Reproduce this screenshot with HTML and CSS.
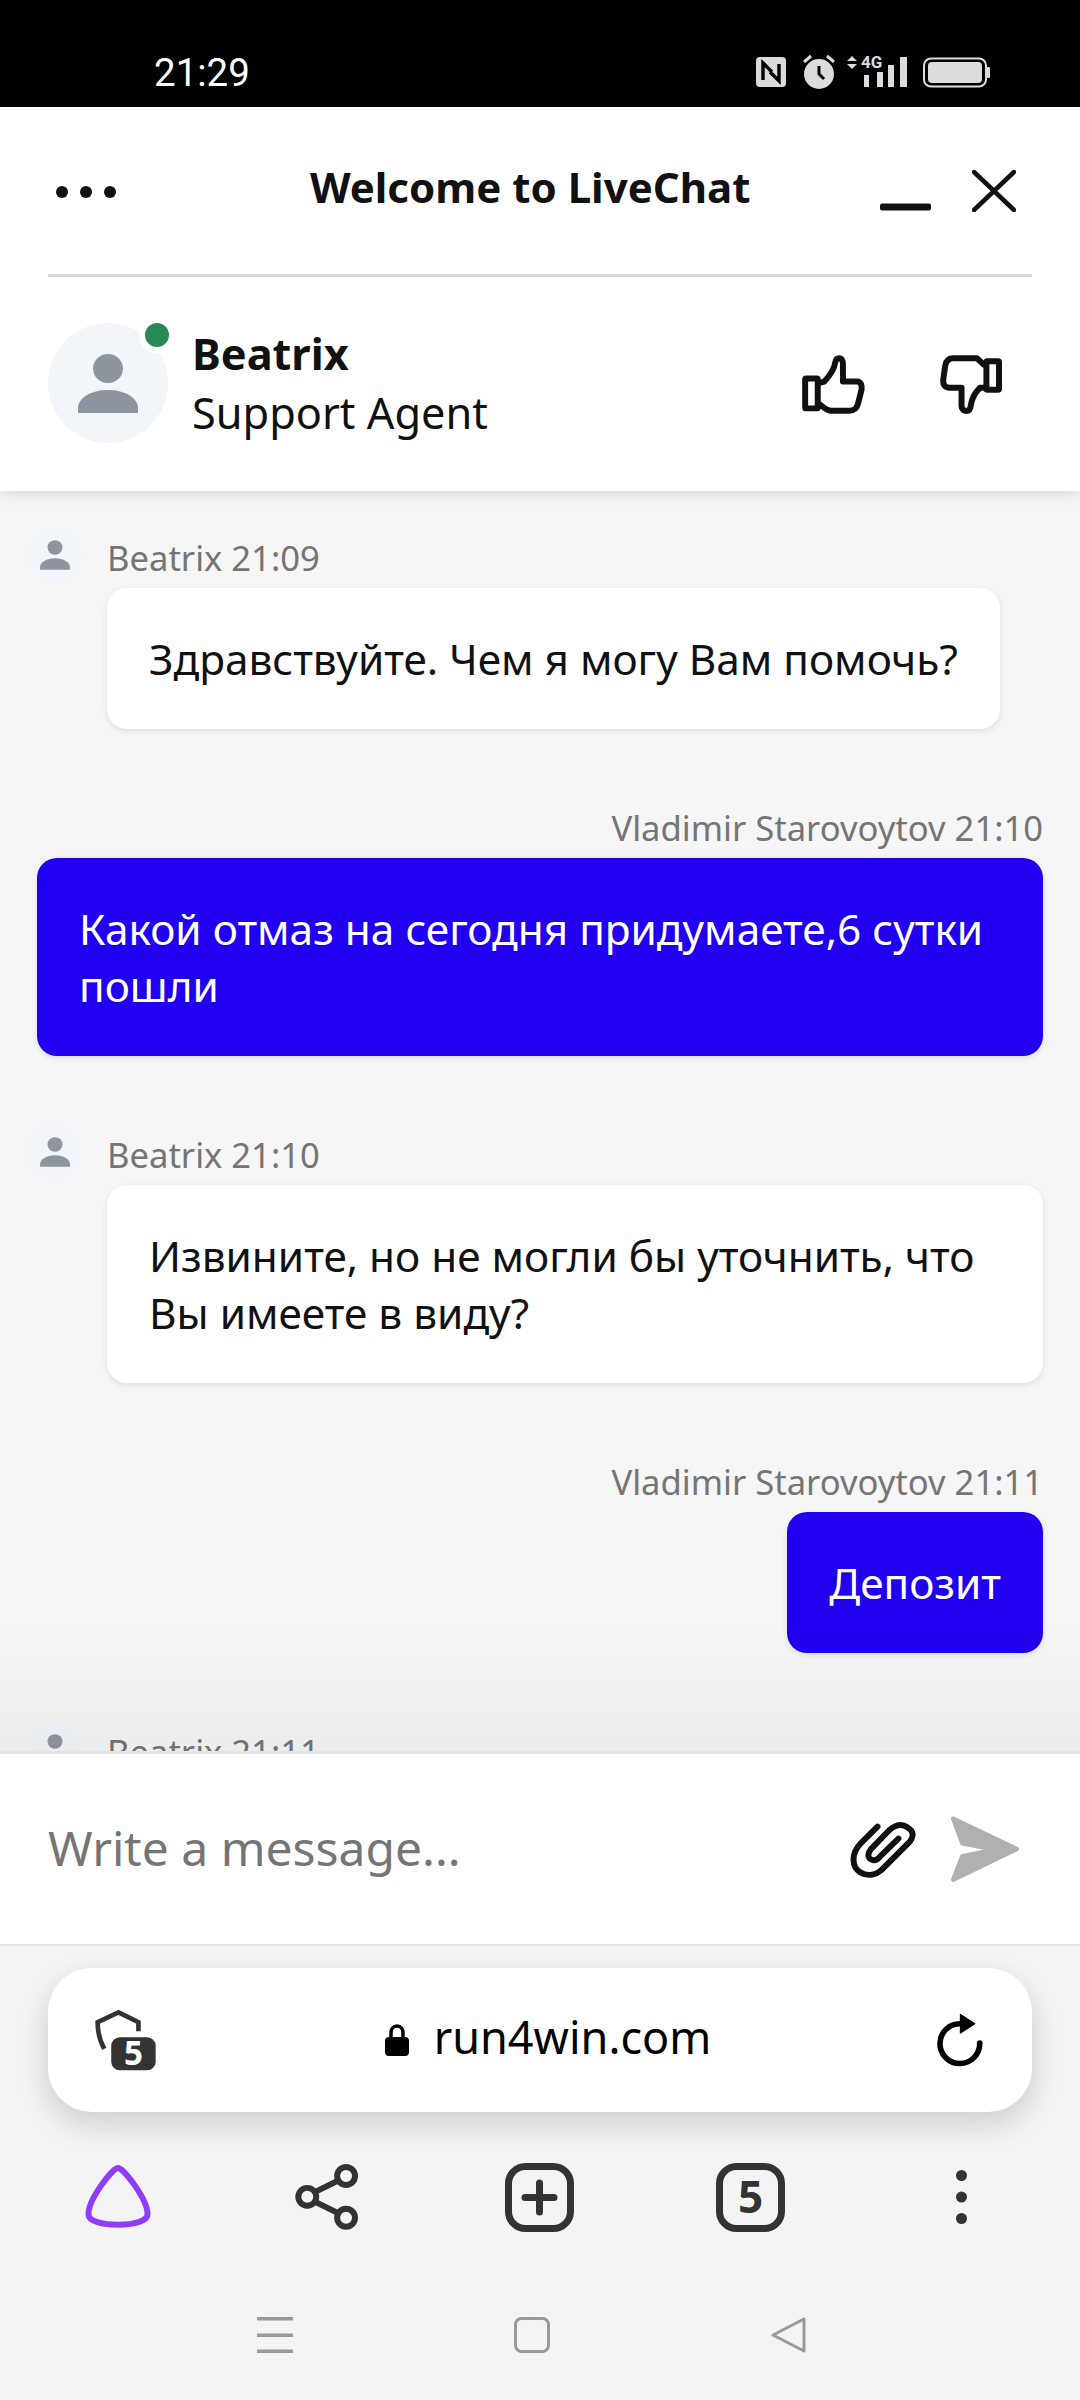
FILE: index.html
```html
<!DOCTYPE html>
<html lang="ru">
<head>
<meta charset="utf-8">
<title>LiveChat</title>
<link rel="stylesheet" href="styles.css">
</head>
<body>
<div class="status">
  <span class="status-time">21:29</span>
  <svg class="status-icons" width="234" height="48" viewBox="756 41 234 48">
    <rect x="756" y="57" width="30" height="30" rx="4" fill="#dcdcdc"/>
    <path d="M763 80V63L772 72M779 64V81L770 72" fill="none" stroke="#000" stroke-width="3.4"/>
    <circle cx="819" cy="74" r="15" fill="#dcdcdc"/>
    <path d="M819 66V74L824 79" fill="none" stroke="#000" stroke-width="3"/>
    <path d="M804 62L811 56M834 62L827 56" stroke="#dcdcdc" stroke-width="3"/>
    <path d="M847 61L852 56L857 61ZM847 64H857L852 69Z" fill="#dcdcdc"/>
    <text class="status-4g" x="861" y="68">4G</text>
    <rect x="864" y="75" width="5" height="12" fill="#dcdcdc"/>
    <rect x="877" y="72" width="6" height="15" fill="#dcdcdc"/>
    <rect x="888" y="65" width="6" height="22" fill="#dcdcdc"/>
    <rect x="900" y="57" width="7" height="30" fill="#dcdcdc"/>
    <rect x="924" y="58.500" width="62" height="28" rx="7" fill="none" stroke="#dcdcdc" stroke-width="2"/>
    <rect x="928" y="62" width="54" height="21" rx="4" fill="#dcdcdc"/>
    <rect x="987" y="67" width="3" height="11" rx="1" fill="#dcdcdc"/>
  </svg>
</div>

<header class="head">
  <div class="title-bar">
    <svg class="dots" width="60" height="12" viewBox="0 0 60 12"><circle cx="6" cy="6" r="6"/><circle cx="30" cy="6" r="6"/><circle cx="54" cy="6" r="6"/></svg>
    <h1 class="title">Welcome to LiveChat</h1>
    <svg class="win-min" width="51" height="8" viewBox="0 0 51 8"><rect width="51" height="7" y="0.500" rx="2"/></svg>
    <svg class="win-close" width="44" height="42" viewBox="0 0 44 42"><path d="M2 2L42 40M42 2L2 40"/></svg>
  </div>
  <div class="agent">
    <div class="avatar-large">
      <svg width="60" height="59" viewBox="0 0 60 59"><ellipse cx="30" cy="14.500" rx="15" ry="14.500"/><path d="M0 59V54C0 44 13 36 30 36S60 44 60 54V59Z"/></svg>
      <span class="online"></span>
    </div>
    <div class="agent-text">
      <div class="agent-name">Beatrix</div>
      <div class="agent-role">Support Agent</div>
    </div>
    <svg class="thumb thumb-up" width="69" height="65" viewBox="84 61 207 196"><rect x="102" y="141" width="38" height="90" rx="3"/><path d="M142 155L160 150C178 130 190 112 192 95C194 84 198 80 204 80C212 80 216 86 216 100V150H258C270 150 274 160 272 175L262 215C258 232 250 238 235 238H182C168 238 160 230 148 220"/></svg>
    <svg class="thumb thumb-down" width="68" height="65" viewBox="499 69 205 196"><rect x="648" y="97" width="38" height="86" rx="3"/><path d="M640 107L620 88H548C532 88 526 98 524 110L518 150C516 168 522 177 538 177H573V232C573 242 580 247 588 247C596 247 600 240 601 230C604 208 615 190 628 177H640"/></svg>
  </div>
</header>

<main class="chat">
  <article class="msg">
    <div class="avatar-small"><svg width="30" height="30" viewBox="0 0 60 59"><ellipse cx="30" cy="14.500" rx="15" ry="14.500"/><path d="M0 59V54C0 44 13 36 30 36S60 44 60 54V59Z"/></svg></div>
    <div class="meta">Beatrix 21:09</div>
    <div class="bubble">Здравствуйте. Чем я могу Вам помочь?</div>
  </article>
  <article class="msg mine">
    <div class="meta">Vladimir Starovoytov 21:10</div>
    <div class="bubble">Какой отмаз на сегодня придумаете,6 сутки пошли</div>
  </article>
  <article class="msg">
    <div class="avatar-small"><svg width="30" height="30" viewBox="0 0 60 59"><ellipse cx="30" cy="14.500" rx="15" ry="14.500"/><path d="M0 59V54C0 44 13 36 30 36S60 44 60 54V59Z"/></svg></div>
    <div class="meta">Beatrix 21:10</div>
    <div class="bubble">Извините, но не могли бы уточнить, что Вы имеете в виду?</div>
  </article>
  <article class="msg mine">
    <div class="meta">Vladimir Starovoytov 21:11</div>
    <div class="bubble">Депозит</div>
  </article>
  <article class="msg">
    <div class="avatar-small"><svg width="30" height="30" viewBox="0 0 60 59"><ellipse cx="30" cy="14.500" rx="15" ry="14.500"/><path d="M0 59V54C0 44 13 36 30 36S60 44 60 54V59Z"/></svg></div>
    <div class="meta">Beatrix 21:11</div>
  </article>
  <div class="fade"></div>
</main>

<footer class="composer">
  <span class="placeholder">Write a message...</span>
  <svg class="clip" width="67" height="58" viewBox="60 65 200 175"><path d="M142 82L92 132C60 165 65 205 90 220C115 235 140 225 155 212L235 132C255 110 250 95 232 84C215 72 195 78 178 92L122 150C108 168 115 180 128 183C138 185 142 180 150 172L205 118"/></svg>
  <svg class="send" width="70" height="66" viewBox="360 48 215 200"><path d="M370 55L565 148L370 242L398 170L500 150L398 130Z"/></svg>
</footer>

<section class="browser">
  <div class="url-bar">
    <svg class="shield" width="62" height="68" viewBox="105 55 185 205"><path d="M132 175C118 150 112 125 112 95L175 65L235 95V122"/><rect x="153" y="140" width="134" height="100" rx="26"/><text x="220" y="224" class="shield-num">5</text></svg>
    <div class="url">
      <svg class="lock" width="24" height="32" viewBox="0 0 24 32"><path d="M6 14V9C6 5 8 2 12 2S18 5 18 9V14" fill="none" stroke="#000" stroke-width="3.500"/><rect y="13" width="24" height="19" rx="4"/></svg>
      <span class="url-text">run4win.com</span>
    </div>
    <svg class="reload" width="48" height="55" viewBox="45 35 145 165"><path d="M180 128A60 60 0 1 1 122 70" fill="none" stroke="#000" stroke-width="17" stroke-linecap="round"/><path d="M122 42L165 70L122 98Z" stroke="#000" stroke-width="4" stroke-linejoin="round"/></svg>
  </div>
  <nav class="tools">
    <div class="tool"><svg class="alice" width="70" height="68" viewBox="40 30 210 205"><path d="M145 45C160 45 235 138 234 185C234 205 192 216 145 216C98 216 56 205 56 185C55 138 130 45 145 45Z"/></svg></div>
    <div class="tool"><svg class="tool-line share" width="68" height="72" viewBox="40 30 205 215"><path d="M107 122L176 88M107 152L176 186"/><circle cx="83" cy="137" r="27"/><circle cx="200" cy="74" r="27"/><circle cx="200" cy="200" r="27"/></svg></div>
    <div class="tool"><svg class="tool-line" width="69" height="69" viewBox="0 0 69 69"><rect x="3.500" y="3.500" width="62" height="62" rx="17"/><path d="M34.500 20V49M20 34.500H49"/></svg></div>
    <div class="tool"><svg class="tool-line" width="69" height="69" viewBox="0 0 69 69"><rect x="3.500" y="3.500" width="62" height="62" rx="17"/><text class="tab-num" x="34.500" y="50">5</text></svg></div>
    <div class="tool"><svg width="11" height="54" viewBox="0 0 11 54" fill="#333"><circle cx="5.500" cy="5.500" r="5.500"/><circle cx="5.500" cy="27" r="5.500"/><circle cx="5.500" cy="48.500" r="5.500"/></svg></div>
  </nav>
  <nav class="sysnav">
    <div class="tool"><svg width="36" height="36" viewBox="0 0 36 36" fill="#999"><rect width="36" height="3.500"/><rect y="16.500" width="36" height="3.500"/><rect y="32.500" width="36" height="3.500"/></svg></div>
    <div class="tool"><svg width="36" height="36" viewBox="0 0 36 36"><rect x="1.500" y="1.500" width="33" height="33" rx="6" fill="none" stroke="#999" stroke-width="3"/></svg></div>
    <div class="tool"><svg width="36" height="36" viewBox="0 0 36 36"><path d="M33 2V34L2 18Z" fill="none" stroke="#999" stroke-width="3" stroke-linejoin="round"/></svg></div>
  </nav>
</section>
</body>
</html>
```
FILE: styles.css
```css
* { box-sizing: border-box; }
html, body { margin: 0; padding: 0; }
body {
  width: 1080px;
  height: 2400px;
  display: flex;
  flex-direction: column;
  overflow: hidden;
  font-family: "Noto Sans", "Open Sans", sans-serif;
  background: #f4f4f4;
  color: #111;
}
.status {
  height: 107px;
  flex: none;
  background: #000;
  display: flex;
  align-items: flex-end;
  padding: 0 90px 18px 154px;
  justify-content: space-between;
}
.status-time { font-family: Roboto, sans-serif; font-size: 38.5px; color: #fff; line-height: 48px; margin-bottom: -8px; }
.status-icons { display: block; }
.status-4g { font-family: Roboto, sans-serif; font-weight: 700; font-size: 17px; fill: #dcdcdc; }

.head {
  flex: none;
  height: 384px;
  background: #fff;
  box-shadow: 0 3px 14px rgba(0,0,0,.12);
  position: relative;
  z-index: 2;
}
.title-bar {
  height: 170px;
  margin: 0 48px;
  padding-right: 16px;
  border-bottom: 3px solid #d6d6d6;
  display: flex;
  align-items: center;
}
.dots { fill: #111; margin-left: 8px; flex: none; margin-top: 2px; }
.title {
  margin: -8px 0 0 194px;
  font-size: 42px;
  line-height: 56px;
  font-weight: 700;
  white-space: nowrap;
}
.win-min { fill: #111; flex: none; margin: 32px 0 0 auto; }
.win-close { flex: none; margin: 0 0 0 41px; }
.win-close path { stroke: #111; stroke-width: 4.500; stroke-linecap: round; fill: none; }
.agent {
  display: flex;
  align-items: center;
  padding: 0 75px 0 48px;
  height: 214px;
}
.avatar-large {
  width: 120px;
  height: 120px;
  border-radius: 50%;
  background: #f2f6fa;
  display: flex;
  align-items: center;
  justify-content: center;
  position: relative;
  flex: none;
  fill: #8d959e;
  margin-top: -2px;
}
.online {
  position: absolute;
  top: -6px;
  right: -7px;
  width: 36px;
  height: 36px;
  border-radius: 50%;
  background: #2a8a55;
  border: 6px solid #fff;
}
.agent-text { margin: -3px 0 0 24px; flex: 1; font-size: 43.3px; line-height: 59px; }
.agent-name { font-weight: 700; }
.thumb { flex: none; fill: none; stroke: #111; stroke-width: 18; stroke-linejoin: round; stroke-linecap: round; }
.thumb-down { margin-left: 69px; }

.chat {
  flex: 1;
  min-height: 0;
  background: #f6f6f7;
  padding-top: 37px;
  overflow: hidden;
  position: relative;
}
.msg {
  display: grid;
  grid-template-columns: 55px minmax(0, 1fr);
  column-gap: 25px;
  padding: 0 37px 69px 27px;
  justify-items: start;
}
.avatar-small {
  width: 55px;
  height: 55px;
  margin-top: -1px;
  border-radius: 50%;
  background: #f2f6fa;
  fill: #8d959e;
  display: flex;
  align-items: center;
  justify-content: center;
}
.meta {
  grid-column: 2;
  font-size: 34.6px;
  line-height: 60px;
  color: #757575;
  white-space: nowrap;
  align-self: start;
}
.bubble {
  grid-column: 2;
  padding: 42px;
  font-size: 42.35px;
  line-height: 57px;
  background: #fff;
  border-radius: 20px;
  box-shadow: 0 2px 6px rgba(0,0,0,.1);
}
.msg.mine { grid-template-columns: minmax(0, 1fr); padding-left: 37px; justify-items: end; }
.mine .meta, .mine .bubble { grid-column: 1; }
.mine .bubble { background: #2000ee; color: #fff; }
.fade {
  position: absolute;
  left: 0;
  right: 0;
  bottom: 0;
  height: 130px;
  background: linear-gradient(rgba(0,0,0,0), rgba(0,0,0,.04));
}
.composer {
  flex: none;
  height: 195px;
  background: #fff;
  border-top: 3px solid #e4e4e4;
  border-bottom: 2px solid #e4e4e4;
  display: flex;
  align-items: center;
  padding: 0 60px 0 48px;
}
.placeholder { flex: 1; font-size: 48px; color: #757575; margin-top: -3px; }
.clip { fill: none; stroke: #111; stroke-width: 18; stroke-linecap: round; stroke-linejoin: round; margin-top: 2px; }
.send { fill: #b0b0b0; stroke: #b0b0b0; stroke-width: 14; stroke-linejoin: round; margin-left: 33px; }

.browser { flex: none; height: 454px; padding-top: 22px; background: #f4f4f4; }
.url-bar {
  margin: 0 48px;
  height: 144px;
  background: #fff;
  border-radius: 44px;
  box-shadow: 0 12px 30px rgba(0,0,0,.16);
  display: flex;
  align-items: center;
  padding: 0 49px 0 47px;
}
.shield { fill: none; stroke: #333; stroke-width: 14; flex: none; margin-top: 5px; }
.shield rect { fill: #333; stroke: none; }
.shield-num { font-family: "Noto Sans", sans-serif; font-weight: 700; font-size: 100px; fill: #fff; stroke: none; text-anchor: middle; }
.url { flex: 1; display: flex; align-items: center; justify-content: center; gap: 25px; padding-left: 4px; }
.lock { flex: none; }
.url-text { font-size: 45px; line-height: 60px; color: #000; margin-top: -6px; }
.reload { flex: none; margin-top: -2px; }
.tools {
  display: grid;
  grid-template-columns: repeat(5, 211px);
  padding-left: 12px;
  margin-top: 49px;
  height: 70px;
}
.tool { display: flex; align-items: center; justify-content: center; }
.alice { fill: none; stroke: #8f3dfb; stroke-width: 18; stroke-linejoin: round; }
.tool-line { fill: none; stroke: #333; stroke-width: 7; stroke-linecap: round; }
.tool-line.share { stroke-width: 18; margin-right: 4px; }
.tab-num { font-family: "Noto Sans", sans-serif; font-weight: 700; font-size: 44px; fill: #333; stroke: none; text-anchor: middle; }
.sysnav {
  display: grid;
  grid-template-columns: repeat(3, 257px);
  padding-left: 146px;
  margin-top: 86px;
  height: 36px;
}
```
